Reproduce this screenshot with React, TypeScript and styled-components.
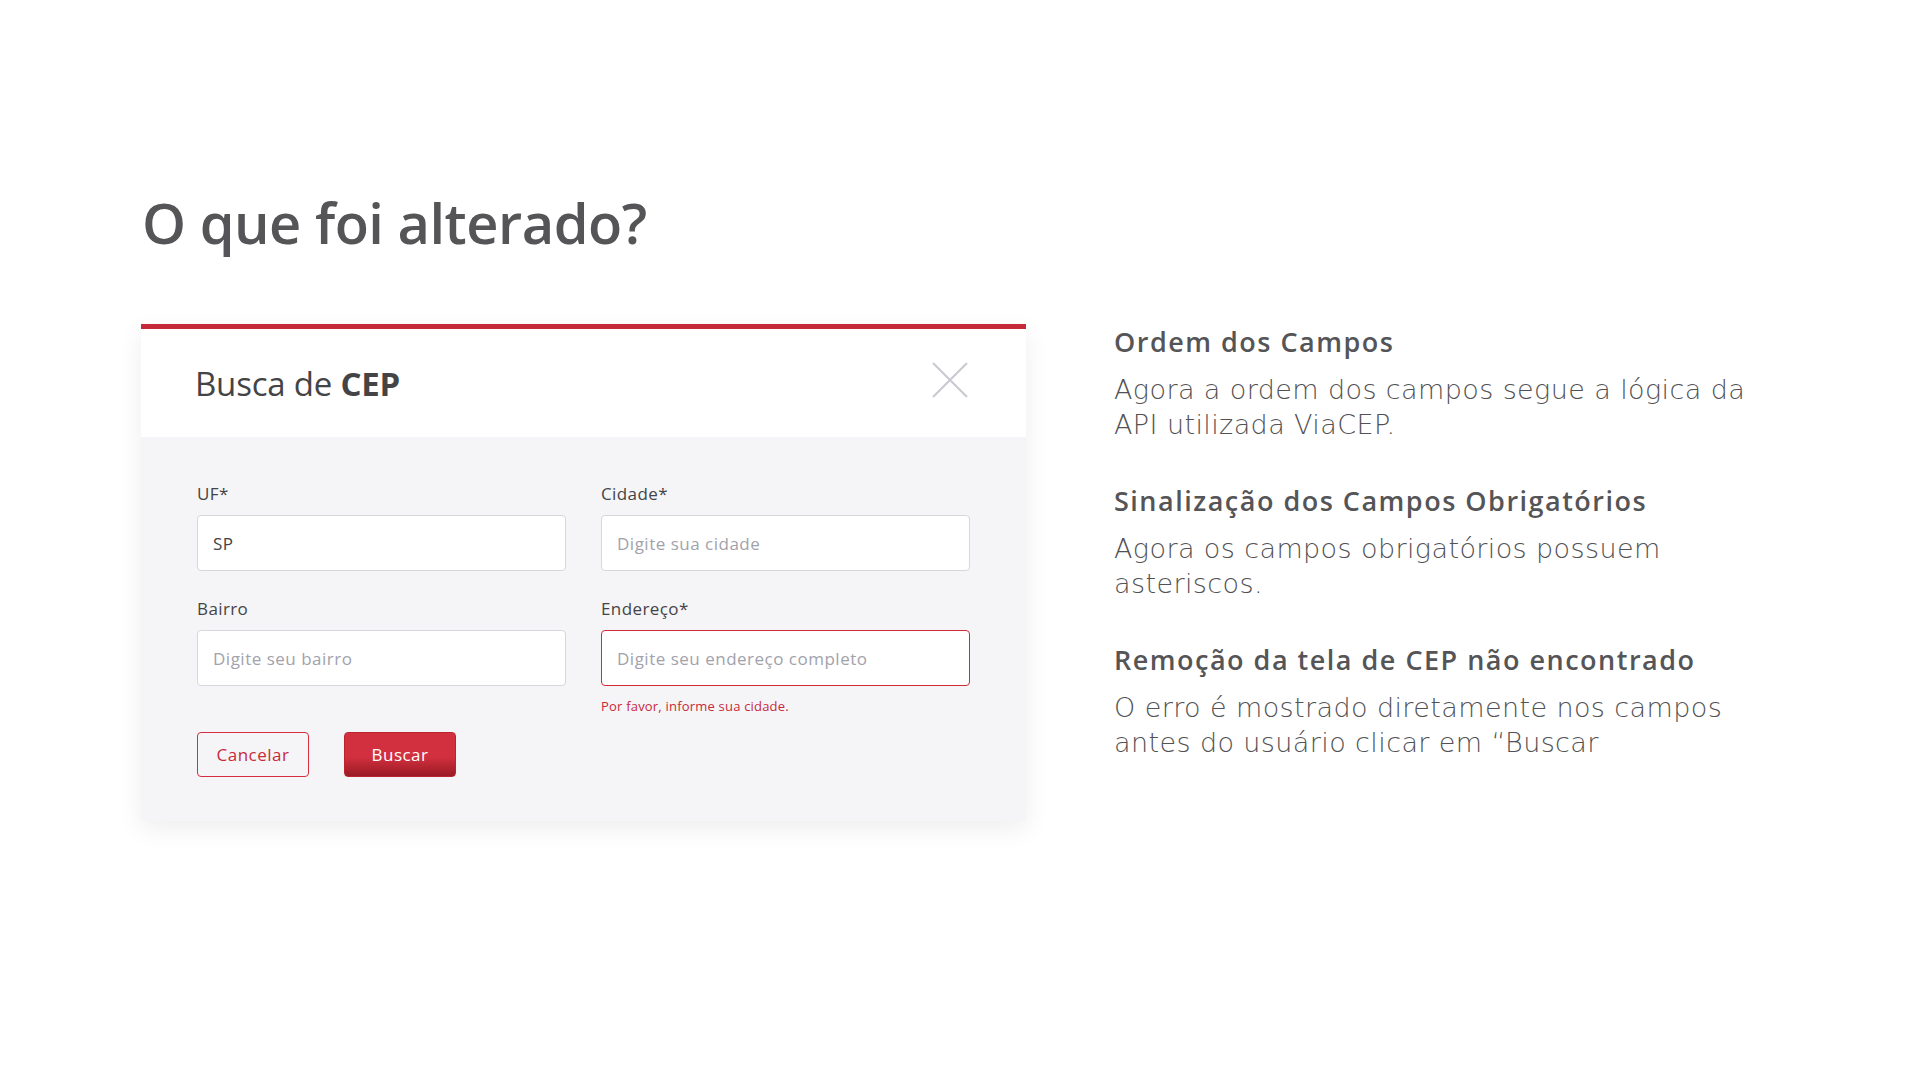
import React from "react";
import styled, { createGlobalStyle } from "styled-components";

const GlobalStyle = createGlobalStyle`
  html, body {
    margin: 0;
    padding: 0;
    background: #ffffff;
  }
  body {
    font-family: "Open Sans", "Noto Sans", sans-serif;
    color: #555555;
  }
  * {
    box-sizing: border-box;
  }
`;

const sections = [
  {
    title: "Ordem dos Campos",
    lines: ["Agora a ordem dos campos segue a lógica da", "API utilizada ViaCEP."],
  },
  {
    title: "Sinalização dos Campos Obrigatórios",
    lines: ["Agora os campos obrigatórios possuem", "asteriscos."],
  },
  {
    title: "Remoção da tela de CEP não encontrado",
    lines: ["O erro é mostrado diretamente nos campos", "antes do usuário clicar em “Buscar"],
  },
];

const App: React.FC = () => {
  return (
    <>
      <GlobalStyle />
      <Page>
        <PageTitle>O que foi alterado?</PageTitle>
        <Content>
          <Modal>
            <ModalHeader>
              <ModalTitle>
                Busca de <strong>CEP</strong>
              </ModalTitle>
              <CloseButton aria-label="Fechar">
                <svg width="36" height="36" viewBox="0 0 36 36" fill="none">
                  <path d="M1 1L35 35M35 1L1 35" stroke="#c9c9d1" strokeWidth="2" />
                </svg>
              </CloseButton>
            </ModalHeader>
            <ModalBody>
              <FieldGrid>
                <Field>
                  <Label>UF*</Label>
                  <Input defaultValue="SP" />
                </Field>
                <Field>
                  <Label>Cidade*</Label>
                  <Input placeholder="Digite sua cidade" />
                </Field>
                <Field>
                  <Label>Bairro</Label>
                  <Input placeholder="Digite seu bairro" />
                </Field>
                <Field>
                  <Label>Endereço*</Label>
                  <Input $invalid placeholder="Digite seu endereço completo" />
                  <ErrorText>Por favor, informe sua cidade.</ErrorText>
                </Field>
              </FieldGrid>
              <Actions>
                <Button $variant="outline">Cancelar</Button>
                <Button $variant="primary">Buscar</Button>
              </Actions>
            </ModalBody>
          </Modal>

          <Notes>
            {sections.map((section) => (
              <Note key={section.title}>
                <NoteTitle>{section.title}</NoteTitle>
                <NoteText>
                  {section.lines[0]}
                  <br />
                  {section.lines[1]}
                </NoteText>
              </Note>
            ))}
          </Notes>
        </Content>
      </Page>
    </>
  );
};

const Page = styled.main`
  width: 1920px;
  min-height: 1080px;
  padding: 194px 142px 0 141px;
`;

const PageTitle = styled.h1`
  margin: 0 0 74px 1px;
  font-size: 56px;
  line-height: 1;
  font-weight: 600;
  color: #555557;
  letter-spacing: -0.5px;
`;

const Content = styled.div`
  display: flex;
  align-items: flex-start;
  gap: 88px;
`;

const Modal = styled.section`
  width: 885px;
  flex-shrink: 0;
  border-top: 5px solid #c42a38;
  background: #f5f5f7;
  box-shadow: 0 8px 24px rgba(0, 0, 0, 0.07);
`;

const ModalHeader = styled.header`
  height: 108px;
  background: #ffffff;
  display: flex;
  align-items: center;
  justify-content: space-between;
  padding: 0 58px 0 54px;
`;

const ModalTitle = styled.h2`
  margin: 0;
  font-size: 33px;
  font-weight: 400;
  color: #444446;
  letter-spacing: -0.2px;

  strong {
    font-weight: 700;
  }
`;

const CloseButton = styled.button`
  width: 36px;
  height: 36px;
  padding: 0;
  border: none;
  background: none;
  display: flex;
  cursor: pointer;
  margin-top: -6px;
`;

const ModalBody = styled.div`
  padding: 47px 56px 44px;
`;

const FieldGrid = styled.div`
  display: grid;
  grid-template-columns: 1fr 1fr;
  column-gap: 35px;
  row-gap: 28px;
`;

const Field = styled.div`
  display: flex;
  flex-direction: column;
`;

const Label = styled.label`
  font-size: 17px;
  line-height: 20px;
  font-weight: 500;
  letter-spacing: 0.4px;
  color: #444446;
  margin-bottom: 11px;
`;

const Input = styled.input<{ $invalid?: boolean }>`
  height: 56px;
  padding: 0 15px;
  border: 1px solid ${({ $invalid }) => ($invalid ? "#d02a3b" : "#d6d6dd")};
  border-radius: 4px;
  background: #ffffff;
  font-family: inherit;
  font-size: 17px;
  font-weight: 500;
  letter-spacing: 0.5px;
  color: #444446;
  outline: none;

  &::placeholder {
    color: #a2a2ac;
    font-weight: 400;
  }
`;

const ErrorText = styled.span`
  margin-top: 12px;
  font-size: 13px;
  line-height: 16px;
  letter-spacing: 0.2px;
  color: #c9283a;
`;

const Actions = styled.div`
  display: flex;
  gap: 35px;
  margin-top: 18px;
`;

const Button = styled.button<{ $variant: "outline" | "primary" }>`
  width: 112px;
  height: 45px;
  border-radius: 4px;
  font-family: inherit;
  font-size: 17px;
  font-weight: 500;
  letter-spacing: 0.5px;
  cursor: pointer;
  border: 1px solid ${({ $variant }) => ($variant === "primary" ? "#b9242f" : "#d32f3f")};
  color: ${({ $variant }) => ($variant === "primary" ? "#ffffff" : "#c92a3a")};
  background: ${({ $variant }) =>
    $variant === "primary"
      ? "linear-gradient(to bottom, #d3303f 0%, #d3303f 55%, #9a1b25 100%)"
      : "transparent"};
`;

const Notes = styled.aside`
  display: flex;
  flex-direction: column;
  gap: 43px;
  margin-top: 2px;
  white-space: nowrap;
`;

const Note = styled.div`
  display: flex;
  flex-direction: column;
`;

const NoteTitle = styled.h3`
  margin: 0;
  font-size: 27px;
  line-height: 32px;
  font-weight: 600;
  letter-spacing: 1.5px;
  color: #555557;
`;

const NoteText = styled.p`
  margin: 14px 0 0;
  font-family: "DejaVu Sans", "Open Sans", sans-serif;
  font-size: 27px;
  line-height: 35px;
  font-weight: 200;
  letter-spacing: 0.4px;
  color: #525254;
`;

export default App;
